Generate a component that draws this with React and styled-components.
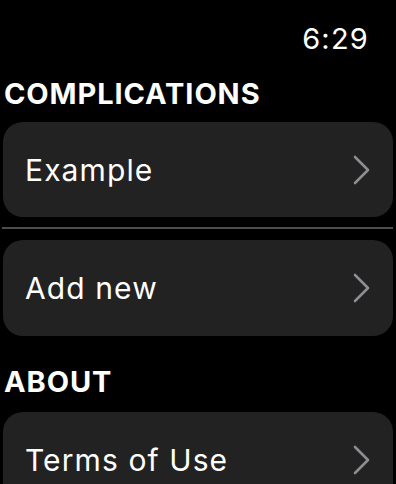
import React from "react";
import styled, { createGlobalStyle } from "styled-components";

const Global = createGlobalStyle`
  html, body { margin: 0; padding: 0; background: #000; }
  body { font-family: Inter, "Noto Sans", sans-serif; color: #fff; -webkit-font-smoothing: antialiased; }
`;

const Screen = styled.div`
  width: 396px;
  height: 484px;
  overflow: hidden;
  background: #000;
  display: flex;
  flex-direction: column;
  padding: 0 3px;
  box-sizing: border-box;
`;

const StatusBar = styled.div`
  display: flex;
  justify-content: flex-end;
  padding: 23px 24px 0 0;
  height: 38px;
  flex-shrink: 0;
`;

const Time = styled.span`
  font-size: 29px;
  line-height: 32px;
  font-weight: 400;
  letter-spacing: 1.2px;
`;

const SectionTitle = styled.h2`
  margin: ${(p) => p.$top}px 0 0 1px;
  font-size: 29px;
  line-height: 32px;
  font-weight: 700;
  letter-spacing: 0.9px;
  height: 32px;
  flex-shrink: 0;
`;

const Card = styled.div`
  display: flex;
  align-items: center;
  justify-content: space-between;
  height: ${(p) => p.$h}px;
  margin-top: ${(p) => p.$top}px;
  flex-shrink: 0;
  background: #222222;
  border-radius: 20px;
  padding: 0 22px 0 22px;
`;

const Label = styled.span`
  font-size: 30px;
  font-weight: 400;
  letter-spacing: 1.1px;
  color: #fff;
`;

const Separator = styled.div`
  margin-top: 10px;
  height: 2px;
  flex-shrink: 0;
  background: #4d4d4d;
  margin-left: -1px;
`;

const Chevron = () => (
  <svg width="18" height="30" viewBox="0 0 18 30" fill="none">
    <path d="M2 2 L15 15 L2 28" stroke="#8d8d92" strokeWidth="2.6" strokeLinecap="round" strokeLinejoin="round" />
  </svg>
);

const Row = ({ label, h, top }) => (
  <Card $h={h} $top={top}>
    <Label>{label}</Label>
    <Chevron />
  </Card>
);

export default function App() {
  return (
    <>
      <Global />
      <Screen>
        <StatusBar>
          <Time>6:29</Time>
        </StatusBar>
        <SectionTitle $top={17}>COMPLICATIONS</SectionTitle>
        <Row label="Example" h={95} top={12} />
        <Separator />
        <Row label="Add new" h={96} top={11} />
        <SectionTitle $top={30}>ABOUT</SectionTitle>
        <Row label="Terms of Use" h={96} top={14} />
      </Screen>
    </>
  );
}
